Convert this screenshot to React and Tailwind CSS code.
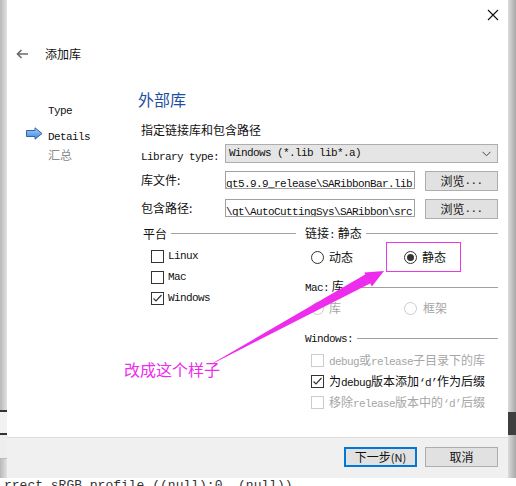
import React from "react";

const cjk = "font-['Noto_Sans_CJK_SC','Noto_Sans',sans-serif]";
const mono = "font-['Liberation_Mono','Noto_Sans_CJK_SC',monospace] text-[11px] tracking-[-0.6px]";

function M({ children }) {
  return <span className={mono}>{children}</span>;
}

function Check({ checked, disabled }) {
  return (
    <span
      className={`flex items-center justify-center w-[13px] h-[13px] shrink-0 bg-white border ${
        disabled ? "border-[#cccccc]" : "border-[#333333]"
      }`}
    >
      {checked && (
        <svg width="11" height="11" viewBox="0 0 11 11">
          <polyline points="1.5,5.5 4,8 9.5,2" fill="none" stroke="#333" strokeWidth="1.2" />
        </svg>
      )}
    </span>
  );
}

function Radio({ checked, disabled }) {
  return (
    <span
      className={`flex items-center justify-center w-[13px] h-[13px] shrink-0 rounded-full bg-white border ${
        disabled ? "border-[#cccccc]" : "border-[#333333]"
      }`}
    >
      {checked && <span className="w-[7px] h-[7px] rounded-full bg-[#333333]" />}
    </span>
  );
}

function GroupTitle({ children, className = "" }) {
  return (
    <div className={`flex items-center ${className}`}>
      <span className="text-[12px] leading-none whitespace-nowrap">{children}</span>
      <span className="flex-1 h-px bg-[#a0a0a0] ml-[4px]" />
    </div>
  );
}

function Btn({ children, focus }) {
  return (
    <button
      className={`w-[73px] h-[20px] flex items-center justify-center text-[12px] bg-[#e1e1e1] ${
        focus ? "border-2 border-[#0078d7]" : "border border-[#adadad]"
      }`}
    >
      {children}
    </button>
  );
}

export default function App() {
  return (
    <div className={`relative w-[516px] h-[486px] overflow-hidden bg-[#f4f4f4] text-[#111] ${cjk}`}>
      <div className="flex h-[478px]">
        {/* left strip of the window behind */}
        <div className="w-[7px] flex flex-col bg-gradient-to-r from-[#b8b8b8] to-[#e2e2e2]">
          <div className="h-[410px]" />
          <div className="h-[2px] bg-[#333]" />
          <div className="h-[21px] bg-[#f2f2f2]" />
          <div className="h-[2px] bg-[#333]" />
          <div className="h-[24px] bg-[#eeeeee] border-b border-[#bbb]" />
        </div>

        {/* dialog */}
        <div className="w-[501px] h-[478px] flex flex-col bg-white">
          <div className="h-[88px] flex flex-col">
            <div className="h-[30px] flex items-center justify-end pr-[9px]">
              <svg width="12" height="12" viewBox="0 0 12 12">
                <path d="M1 1L11 11M11 1L1 11" stroke="#111" strokeWidth="1.1" />
              </svg>
            </div>
            <div className="mt-[14px] h-[20px] flex items-center">
              <svg className="ml-[9px]" width="12" height="10" viewBox="0 0 12 10">
                <path d="M12 5H2M5.5 1L1.5 5L5.5 9" fill="none" stroke="#6b6b6b" strokeWidth="1.6" />
              </svg>
              <span className="ml-[17px] text-[12px]">添加库</span>
            </div>
          </div>

          <div className="flex-1 flex">
            {/* left nav */}
            <div className="w-[131px] flex flex-col pt-[12px]">
              <div className="h-[22px] flex items-center pl-[41px]">
                <M>Type</M>
              </div>
              <div className="h-[22px] flex items-center pl-[19px]">
                <svg width="17" height="13" viewBox="0 0 17 13">
                  <defs>
                    <linearGradient id="ar" x1="0" y1="0" x2="0" y2="1">
                      <stop offset="0" stopColor="#a9cdf5" />
                      <stop offset="1" stopColor="#3f86d9" />
                    </linearGradient>
                  </defs>
                  <path d="M0.5 3.5H9V0.8L16 6.5L9 12.2V9.5H0.5Z" fill="url(#ar)" stroke="#2e64b0" strokeWidth="1" />
                </svg>
                <span className="ml-[5px]">
                  <M>Details</M>
                </span>
              </div>
              <div className="h-[22px] flex items-center pl-[41px] text-[12px] text-[#8a8a8a]">汇总</div>
            </div>

            {/* content */}
            <div className="w-[367px] flex flex-col">
              <div className="h-[22px] leading-[22px] text-[16px] text-[#1d4fa0]">外部库</div>
              <div className="mt-[11px] h-[18px] leading-[18px] pl-[3px] text-[12px]">指定链接库和包含路径</div>

              <div className="mt-[5px] h-[19px] flex items-center">
                <div className="w-[87px] pl-[3px]">
                  <M>Library type:</M>
                </div>
                <div className="w-[273px] h-[19px] flex items-center justify-between bg-[#e5e5e5] border border-[#adadad] pl-[3px] pr-[6px]">
                  <M>Windows (*.lib lib*.a)</M>
                  <svg width="9" height="6" viewBox="0 0 9 6">
                    <path d="M0.5 0.8L4.5 4.8L8.5 0.8" fill="none" stroke="#444" strokeWidth="1" />
                  </svg>
                </div>
              </div>

              <div className="mt-[8px] h-[20px] flex items-start">
                <div className="w-[87px] pl-[3px] h-[18px] flex items-center text-[12px]">库文件:</div>
                <div className="w-[190px] h-[18px] flex items-center justify-end overflow-hidden border border-[#a0a0a0] pr-[2px]">
                  <span className="whitespace-nowrap">
                    <M>D:\lib_qt5.9.9_release\SARibbonBar.lib</M>
                  </span>
                </div>
                <div className="ml-[10px]">
                  <Btn>
                    浏览<M>...</M>
                  </Btn>
                </div>
              </div>

              <div className="mt-[8px] h-[20px] flex items-start">
                <div className="w-[87px] pl-[3px] h-[18px] flex items-center text-[12px]">包含路径:</div>
                <div className="w-[190px] h-[18px] flex items-center justify-end overflow-hidden border border-[#a0a0a0] pr-[2px]">
                  <span className="whitespace-nowrap">
                    <M>D:\qt\AutoCuttingSys\SARibbon\src</M>
                  </span>
                </div>
                <div className="ml-[10px]">
                  <Btn>
                    浏览<M>...</M>
                  </Btn>
                </div>
              </div>

              <div className="mt-[6px] flex">
                {/* 平台 */}
                <div className="w-[167px] flex flex-col">
                  <GroupTitle className="h-[17px] pl-[5px] pr-[9px]">平台</GroupTitle>
                  <div className="mt-[4px] flex flex-col pl-[13px]">
                    <div className="h-[21px] flex items-center gap-[4px]">
                      <Check />
                      <M>Linux</M>
                    </div>
                    <div className="h-[21px] flex items-center gap-[4px]">
                      <Check />
                      <M>Mac</M>
                    </div>
                    <div className="h-[21px] flex items-center gap-[4px]">
                      <Check checked />
                      <M>Windows</M>
                    </div>
                  </div>
                </div>

                {/* 链接 */}
                <div className="w-[193px] flex flex-col">
                  <GroupTitle className="h-[17px]">
                    链接<M>:</M> 静态
                  </GroupTitle>
                  <div className="h-[30px] flex items-center">
                    <div className="w-[81px] pl-[6px] flex items-center gap-[5px] text-[12px]">
                      <Radio />
                      动态
                    </div>
                    <div className="w-[75px] h-[30px] border border-[#e23ce2] pl-[17px] flex items-center gap-[5px] text-[12px]">
                      <Radio checked />
                      静态
                    </div>
                  </div>
                  <GroupTitle className="mt-[6px] h-[18px]">
                    <M>Mac:</M> 库
                  </GroupTitle>
                  <div className="mt-[2px] h-[20px] flex items-center text-[12px] text-[#a6a6a6]">
                    <div className="w-[99px] pl-[6px] flex items-center gap-[5px]">
                      <Radio disabled />库
                    </div>
                    <div className="flex items-center gap-[6px]">
                      <Radio disabled />框架
                    </div>
                  </div>
                  <GroupTitle className="mt-[11px] h-[18px]">
                    <M>Windows:</M>
                  </GroupTitle>
                  <div className="mt-[3px] flex flex-col pl-[6px] text-[12px] whitespace-nowrap">
                    <div className="h-[21px] flex items-center gap-[5px] text-[#a6a6a6]">
                      <Check disabled />
                      <span>
                        <M>debug</M>或<M>release</M>子目录下的库
                      </span>
                    </div>
                    <div className="h-[21px] flex items-center gap-[5px]">
                      <Check checked />
                      <span>
                        为<M>debug</M>版本添加<M>‘d’</M>作为后缀
                      </span>
                    </div>
                    <div className="h-[21px] flex items-center gap-[5px] text-[#a6a6a6]">
                      <Check disabled />
                      <span>
                        移除<M>release</M>版本中的<M>‘d’</M>后缀
                      </span>
                    </div>
                  </div>
                </div>
              </div>
            </div>
          </div>

          <div className="h-[41px] flex justify-end items-start gap-[8px] pt-[9px] pr-[10px] bg-[#f0f0f0] border-t border-[#dcdcdc]">
            <Btn focus>
              下一步<span className="text-[11px]">(N)</span>
            </Btn>
            <Btn>取消</Btn>
          </div>
        </div>

        {/* right strip */}
        <div className="w-[8px] flex flex-col bg-gradient-to-r from-[#dcdcdc] to-[#a8a8a8]">
          <div className="h-[412px]" />
          <div className="h-[23px] bg-[#3f3f3f]" />
        </div>
      </div>

      <div className="h-[8px] overflow-hidden bg-white">
        <div className="pl-[4px] font-['Liberation_Mono',monospace] text-[13px] leading-[16px] text-[#333] whitespace-nowrap">
          rrect sRGB profile ((null):0, (null))
        </div>
      </div>

      {/* annotation overlay */}
      <svg className="absolute left-0 top-0 pointer-events-none" width="516" height="486">
        <polygon points="213,363.5 213.8,362.5 366,274 371,283 " fill="#ee2cee" />
        <polygon points="384,271 364.3,272.5 371.9,286.5" fill="#ee2cee" />
      </svg>
      <div className="absolute left-[124px] top-[359px] text-[16px] leading-[20px] text-[#ee2cee]">改成这个样子</div>
    </div>
  );
}
